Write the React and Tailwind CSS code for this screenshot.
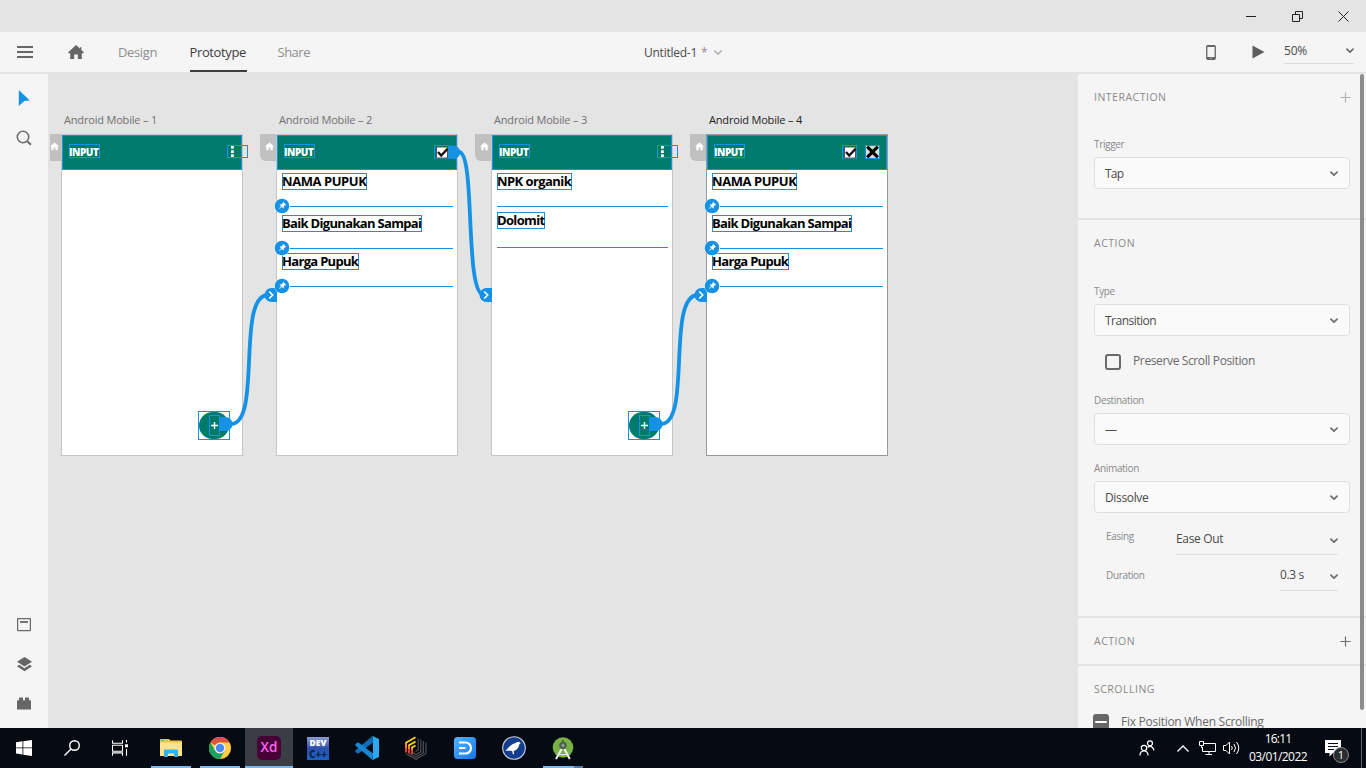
import { MdHome, MdPushPin } from "react-icons/md";

const Chevron = ({ className = "text-[#6e6e6e]" }) => (
  <svg width="8" height="6" viewBox="0 0 8 6" className={className} fill="none" stroke="currentColor" strokeWidth="1.7" strokeLinecap="round" strokeLinejoin="round">
    <path d="M.9 1.2 4 4.2 7.1 1.2" />
  </svg>
);

const Plus = ({ className }) => (
  <svg width="11" height="11" viewBox="0 0 11 11" className={`-mr-px ${className}`} stroke="currentColor" strokeWidth="1.2">
    <path d="M5.5 .5v10M.5 5.5h10" />
  </svg>
);

function TitleBar() {
  return (
    <div className="flex h-8 shrink-0 items-center justify-end gap-9 bg-[#e4e4e4] pr-[17px] text-[#222]">
      <svg width="10" height="11" viewBox="0 0 10 11" stroke="currentColor"><path d="M0 5.5h10" /></svg>
      <svg width="11" height="11" viewBox="0 0 11 11" fill="none" stroke="currentColor" className="-mr-px">
        <path d="M.5 3.5h7v7h-7zM3.5 3.500V.5h7v7h-3" />
      </svg>
      <svg width="11" height="11" viewBox="0 0 11 11" fill="none" stroke="currentColor"><path d="M.5 .5l10 10M10.5 .5l-10 10" /></svg>
    </div>
  );
}

function Toolbar() {
  return (
    <div className="flex h-10 shrink-0 bg-[#f5f5f5] text-[13px] tracking-[-0.37px] text-[#8e8e8e]">
      <div className="flex w-[576px] items-center">
        <svg width="16" height="12" viewBox="0 0 16 12" className="ml-[17px]" stroke="#666" strokeWidth="1.8"><path d="M0 1h16M0 6h16M0 11h16" /></svg>
        <svg width="16" height="14" viewBox="0 0 16 14" className="ml-[35px]" fill="#666">
          <path d="M8 0 12 3.6V2.2h1.4v2.7L16 7.4l-.6.9h-1.6V14H9.8V9.4H6.2V14H2.2V8.3H.5L0 7.4z" />
        </svg>
        <span className="ml-[34px] w-[71.5px] pt-0.5">Design</span>
        <span className="flex h-10 w-[57px] items-center border-b-2 border-[#3e3e3e] pt-[3px] text-[#3e3e3e]">Prototype</span>
        <span className="ml-[31px] pt-0.5 tracking-[-0.5px]">Share</span>
      </div>
      <div className="flex flex-1 items-center pt-0.5 pl-[68px] text-[12px] tracking-[-0.25px] text-[#4b4b4b]">
        <span>Untitled-1</span><span className="ml-1 text-[#8e8e8e]">*</span>
        <Chevron className="ml-[7px] text-[#b5b5b5]" />
      </div>
      <div className="flex w-[162px] items-center text-[12px] tracking-[-0.2px] text-[#4b4b4b]">
        <svg width="10" height="15" viewBox="0 0 10 15" className="ml-[2px]">
          <rect x=".75" y=".75" width="8.5" height="13.5" rx="1" fill="#f5f5f5" stroke="#666" strokeWidth="1.3" />
          <path d="M1 .5h8V2H1zM1 12h8v2.3H1z" fill="#666" /><circle cx="5" cy="13" r=".6" fill="#fff" />
        </svg>
        <svg width="13" height="14" viewBox="0 0 13 14" className="ml-9" fill="#5f5f5f"><path d="M.5 .5v13L12.5 7z" /></svg>
        <div className="ml-[19px] flex h-[24px] w-[70px] items-center justify-between border-b border-[#dcdcdc] pb-[1px]">
          <span>50%</span><Chevron />
        </div>
      </div>
    </div>
  );
}

function LeftRail() {
  return (
    <div className="flex w-12 shrink-0 flex-col items-center bg-[#f5f5f5] pt-4">
      <svg width="12" height="17" viewBox="0 0 12 17" fill="#1592e6"><path d="M.8 0 11.8 10.6 6.3 11 .8 16z" /></svg>
      <svg width="16" height="16" viewBox="0 0 16 16" className="mt-[23px]" fill="none" stroke="#6e6e6e" strokeWidth="1.6">
        <circle cx="7" cy="7" r="5.7" /><path d="M11.2 11.2l3.8 3.6" strokeWidth="2" />
      </svg>
      <div className="mt-auto flex flex-col items-center gap-[25px] pb-[18px]">
        <svg width="14" height="14" viewBox="0 0 14 14" fill="none" stroke="#666"><rect x=".6" y=".6" width="12.8" height="12" rx=".6" strokeWidth="1.2" /><path d="M3 4h8" strokeWidth="1.8" /></svg>
        <svg width="15" height="15" viewBox="0 0 15 15" fill="#666"><path d="M7.5 0 15 4.8 7.5 9.6 0 4.8z" /><path d="M0 9.2 2.2 7.8 7.5 11.2l5.3-3.4L15 9.2 7.5 14.2z" /></svg>
        <svg width="14" height="13" viewBox="0 0 14 13" fill="#666"><path d="M0 4.2q0-1 1-1h1V1.3Q2 .6 2.7 .6h2.6Q6 .6 6 1.3v1.9h2V1.3Q8 .6 8.7 .6h2.6q.7 0 .7.7v1.900h1q1 0 1 1V12q0 .6-.6.6H.6Q0 12.6 0 12z" /></svg>
      </div>
    </div>
  );
}

const Check = () => (
  <svg width="14" height="13" viewBox="0 0 14 13">
    <rect x="1" y=".5" width="12" height="12" fill="#555" /><rect x="2" y="1.5" width="10" height="10" fill="#fff" />
    <path d="M3 6l3.200 3.600L12.600 2.800" fill="none" stroke="#111" strokeWidth="2.300" />
  </svg>
);

const FORM = [
  { label: "NAMA PUPUK", top: 38, width: 85, line: 71, spacing: "tracking-[-0.43px]" },
  { label: "Baik Digunakan Sampai", top: 80, width: 140, line: 113, spacing: "tracking-[-0.68px]" },
  { label: "Harga Pupuk", top: 118, width: 77, line: 151, spacing: "tracking-[-0.69px]" },
];
const LIST = [
  { label: "NPK organik", top: 38, width: 75, line: 71, spacing: "tracking-[-0.57px]" },
  { label: "Dolomit", top: 77, width: 48, line: 112, spacing: "tracking-[-0.66px]" },
];

function Artboard({ n, x, active, rows = [], pinned, menu, fab, children }) {
  return (
    <>
      <div className={`absolute top-[37px] text-[11px] leading-[18px] tracking-[-0.18px] ${active ? "text-[#222]" : "text-[#717171]"}`} style={{ left: x + 3 }}>
        Android Mobile – {n}
      </div>
      <div className="absolute top-[60px] flex h-[27px] w-[17px] justify-center rounded-bl-md bg-[#c0c0c0] pt-[7px] pl-px text-white" style={{ left: x - 16 }}>
        <MdHome size={11} />
      </div>
      <div className={`absolute top-[60px] h-[322px] w-[182px] border bg-white ${active ? "border-[#999]" : "border-[#c6c6c6]"}`} style={{ left: x }}>
        <div className="h-[35px] border border-[#1592e6] bg-[#007b6b]" />
        <div className="absolute top-[9px] left-[7px] flex h-[14px] w-[31px] items-center border border-[#1592e6] pt-[2px] text-[10px] font-extrabold tracking-[-0.45px] whitespace-nowrap text-white"><span className="-ml-px">INPUT</span></div>
        {menu && (
          <div className="absolute top-[10px] left-[165px] h-[13px] w-[21px] border border-[#1592e6]">
            <svg width="3" height="11" viewBox="0 0 3 11" className="ml-[3px]" fill="#fff"><path d="M0 0h2.8v2.7H0zM0 4.2h2.8v2.7H0zM0 8.3h2.8V11H0z" /></svg>
          </div>
        )}
        {rows.map(({ label, top, width, line, spacing }) => (
          <div key={label}>
            <div className={`absolute left-[5px] flex h-[17px] items-center border border-[#1592e6] pt-px text-[13px] font-bold whitespace-nowrap text-black ${spacing}`} style={{ top, width }}><span className="-ml-px">{label}</span></div>
            <div className={`absolute h-px bg-[#1592e6] ${pinned ? "left-[13px] w-[163px]" : "left-[5px] w-[171px]"}`} style={{ top: line }} />
          </div>
        ))}
        {fab && (
          <div className="absolute top-[276px] left-[136px] h-[29px] w-8 border border-[#1592e6]">
            <div className="flex h-full w-full items-center justify-center rounded-full bg-[#007b6b]">
              <div className="flex h-[21px] w-[11px] items-center justify-center border border-[#1592e6]">
                <svg width="7" height="7" viewBox="0 0 7 7" stroke="#fff" strokeWidth="1.4"><path d="M3.5 0v7M0 3.5h7" /></svg>
              </div>
            </div>
          </div>
        )}
        {children}
      </div>
    </>
  );
}

const Pins = ({ x }) => [132, 174, 212].map((y) => (
  <svg key={y} width="17" height="17" viewBox="0 0 17 17" className="absolute" style={{ left: x - 3, top: y - 9 }}>
    <circle cx="9" cy="9" r="7.900" fill="#fff" opacity=".7" />
    <circle cx="9" cy="9" r="7.300" fill="#1592e6" />
    <g transform="rotate(45 9 9)"><MdPushPin x="4.500" y="4.500" size={9} color="#fff" /></g>
  </svg>
));

function Canvas() {
  return (
    <div className="min-w-0 flex-1 bg-[#e4e4e4] pl-0.5">
      <div className="relative h-full overflow-hidden">
        <Artboard n={1} x={11} menu fab />
        <Artboard n={2} x={226} rows={FORM} pinned>
          <div className="absolute top-[10px] left-[157px] h-[14px] w-[15px] border border-[#1592e6]"><Check /></div>
        </Artboard>
        <Artboard n={3} x={441} rows={LIST} menu fab />
        <Artboard n={4} x={656} rows={FORM} pinned active>
          <div className="absolute top-[10px] left-[135px] h-[14px] w-[15px] border border-[#1592e6]"><Check /></div>
          <div className="absolute top-[10px] left-[158px] h-[14px] w-[15px] border border-[#1592e6]">
            <svg width="13" height="12" viewBox="0 0 13 12"><rect width="13" height="12" fill="#d9dedd" /><path d="M1.200 .700l10.600 10.600M11.800 .700l-10.600 10.600" stroke="#000" strokeWidth="3.200" /></svg>
          </div>
        </Artboard>
        <svg className="absolute inset-0" width="1028" height="654" viewBox="50 74 1028 654" fill="none">
          <g stroke="#1592e6" strokeWidth="3.8">
            <path d="M231 424C262 424 236 295 268 295" />
            <path d="M459 152C476 152 464 295 484 295" />
            <path d="M661 424C692 424 666 295 698 295" />
          </g>
          <g fill="#1592e6">
            <path d="M448 145.5h6a7 6.8 0 0 1 0 13.5h-6z" />
            <path d="M219.500 417h6a7 7 0 0 1 0 14h-6z" />
            <path d="M649.500 417h6a7 7 0 0 1 0 14h-6z" />
          </g>
          {[277, 492, 707].map((x) => (
            <g key={x}>
              <path d={`M${x} 288h-5.500a7 7 0 0 0 0 14h5.500z`} fill="#1592e6" />
              <path d={`M${x - 7.8} 291.500l3.500 3.500-3.500 3.500`} stroke="#fff" strokeWidth="1.6" />
            </g>
          ))}
        </svg>
        <Pins x={226} />
        <Pins x={656} />
      </div>
    </div>
  );
}

const Heading = ({ children }) => (
  <div className="flex h-[18px] items-center justify-between text-[10.5px] leading-[18px] tracking-[0.5px] text-[#8a8a8a]">{children}</div>
);

const Select = ({ label, value, className, spacing = "tracking-[-0.35px]" }) => (
  <div className={className}>
    <div className="h-[14px] text-[10px] leading-[15px] tracking-[-0.34px] text-[#8a8a8a]">{label}</div>
    <div className={`mt-1.5 flex h-8 items-center justify-between rounded border border-[#dfdfdf] bg-[#fafafa] pt-px pr-[11px] pl-2.5 text-[12px] text-[#4b4b4b] ${spacing}`}>
      <span>{value}</span><Chevron />
    </div>
  </div>
);

function Inspector() {
  return (
    <div className="relative w-[288px] shrink-0 overflow-hidden bg-[#f5f5f5]">
      <section className="h-[146px] border-b-2 border-[#e3e3e3] px-4 pt-[14px]">
        <Heading><span>INTERACTION</span><Plus className="text-[#b3b3b3]" /></Heading>
        <Select className="pt-[31px]" label="Trigger" value="Tap" spacing="tracking-[-0.8px]" />
      </section>
      <section className="h-[398px] border-b-2 border-[#e3e3e3] px-4 pt-[14px]">
        <Heading><span>ACTION</span></Heading>
        <Select className="pt-8" label="Type" value="Transition" spacing="tracking-[-0.5px]" />
        <div className="mt-[18px] flex h-4 items-center pl-[11px]">
          <div className="h-4 w-4 rounded-[3px] border-2 border-[#6a6a6a]" />
          <span className="-mt-[2px] ml-3 text-[12px] tracking-[-0.37px] text-[#6a6a6a]">Preserve Scroll Position</span>
        </div>
        <Select className="pt-[23px]" label="Destination" value="—" />
        <Select className="pt-4" label="Animation" value="Dissolve" />
        <div className="mt-[13px] flex pr-3 pl-3">
          <span className="w-[70px] pt-[3px] text-[10px] tracking-[-0.34px] text-[#8a8a8a]">Easing</span>
          <div className="flex h-[29px] flex-1 justify-between border-b border-[#e1e1e1] text-[12px] leading-[26px] tracking-[-0.35px] text-[#4b4b4b]">
            <span>Ease Out</span><div className="pt-3"><Chevron /></div>
          </div>
        </div>
        <div className="mt-[7px] flex justify-between pr-3 pl-3">
          <span className="pt-[6px] text-[10px] tracking-[-0.34px] text-[#8a8a8a]">Duration</span>
          <div className="flex h-[29px] w-[58px] justify-between border-b border-[#e1e1e1] text-[12px] leading-[26px] tracking-[-0.35px] text-[#4b4b4b]">
            <span>0.3 s</span><div className="pt-3"><Chevron /></div>
          </div>
        </div>
      </section>
      <section className="flex h-12 flex-col justify-center border-b-2 border-[#e3e3e3] px-4">
        <Heading><span>ACTION</span><Plus className="text-[#6e6e6e]" /></Heading>
      </section>
      <section className="px-4 pt-[14px]">
        <Heading><span>SCROLLING</span></Heading>
        <div className="mt-4 -ml-px flex">
          <div className="flex h-4 w-4 items-center justify-center rounded-[3px] bg-[#666]"><div className="h-0.5 w-3 rounded-full bg-white" /></div>
          <span className="ml-3 text-[12px] leading-[16px] tracking-[-0.27px] text-[#6a6a6a]">Fix Position When Scrolling</span>
        </div>
      </section>
      <div className="absolute top-0 right-0.5 h-[636px] w-1 rounded-full bg-[#8c8c8c]" />
    </div>
  );
}

const Task = ({ children, on, className = "" }) => (
  <div className={`relative flex w-12 items-center justify-center ${className}`}>
    {children}
    {on && <div className={`absolute bottom-0 h-0.5 bg-[#76b9ed] ${on}`} />}
  </div>
);

function Taskbar() {
  return (
    <div className="flex h-10 shrink-0 bg-[#060b13] text-white">
      <Task>
        <svg width="16" height="16" viewBox="0 0 16 16" fill="#fff"><path d="M0 2.3 6.500 1.300v6.200H0zM7.300 1.200 16 0v7.500H7.300zM0 8.300h6.500v6.200L0 13.600zM7.300 8.300H16V16l-8.700-1.300z" /></svg>
      </Task>
      <Task>
        <svg width="16" height="16" viewBox="0 0 16 16" fill="none" stroke="#fff" strokeWidth="1.4"><circle cx="10.500" cy="5.500" r="4.800" /><path d="M7 9 .500 15.500" /></svg>
      </Task>
      <Task>
        <svg width="16" height="16" viewBox="0 0 16 16" fill="none" stroke="#fff" strokeWidth="1.1"><path d="M.5 .3v3h10v-3M.5 5.300h10v6H.5zM.5 15.700v-2.800h10v2.800M14.500 0v2.500M14.500 9v6.700" /><path d="M13 4.300h3v3h-3z" fill="#fff" stroke="none" /></svg>
      </Task>
      <Task on="inset-x-1" className="ml-[3px]">
        <svg width="22" height="18" viewBox="0 0 22 18"><path d="M0 1q0-1 1-1h8l1.500 1.500H21q1 0 1 1V17H0z" fill="#f5c63c" /><path d="M0 3.500h22V17H0z" fill="#ffe391" /><path d="M1.500 1h2v1h-2z" fill="#3bb273" /><path d="M4 18v-6.500Q4 10.500 5 10.500h12q1 0 1 1V18h-4v-3.500H8V18z" fill="#35b1ea" /></svg>
      </Task>
      <Task on="inset-x-1" className="mx-px">
        <svg width="22" height="22" viewBox="0 0 22 22">
          <circle cx="11" cy="11" r="11" fill="#ffcd42" />
          <path d="M11 11 1.470 5.500A11 11 0 0 1 20.530 5.500H11z" fill="#de5246" />
          <path d="M1.470 5.500A11 11 0 0 0 11 22l4.760-8.250L6.240 13.750z" fill="#1aa15f" />
          <circle cx="11" cy="11" r="5.500" fill="#f1f1f1" /><circle cx="11" cy="11" r="4.200" fill="#4c8bf5" />
        </svg>
      </Task>
      <Task on="inset-x-0" className="bg-[#3a3e44]">
        <div className="flex h-6 w-6 items-center justify-center rounded-[5px] bg-[#470137] text-[13.500px] leading-none font-semibold text-[#ff61f6]">Xd</div>
      </Task>
      <Task className="ml-px">
        <div className="flex h-[23px] w-[22px] flex-col items-center overflow-hidden bg-linear-to-b from-[#8f9bd0] via-[#2d4fae] to-[#1764c8] font-extrabold">
          <span className="text-[8.500px] leading-[12px]">DEV</span>
          <span className="text-[10px] leading-[11px] text-[#0a2747]">C++</span>
        </div>
      </Task>
      <Task className="ml-px">
        <svg width="24" height="24" viewBox="0 0 24 24"><path d="M17.500 0 18 6.500 3.500 17.500l-1.200.1L.3 15.700v-1.200z" fill="#0f6db8" /><path d="M17.500 24 18 17.500 3.500 6.500 2.300 6.400.3 8.300v1.200z" fill="#1787d0" /><path d="M17.500 0 24 3v18l-6.500 3-.6-.5 1.100-.8V1.300l-1.100-.8z" fill="#2aa9f1" /></svg>
      </Task>
      <Task className="ml-px">
        <svg width="22" height="24" viewBox="0 0 22 24" fill="none" strokeWidth="1.800">
          <path d="M1 17.800 11 23.200l10-5.700V6.500M4.200 17.500 11 21l7.400-4.300V5M7.300 16.500 11 18.500l4.800-2.800V3.500M10.500 15.500 13.200 14V2.500" stroke="#4e4e50" strokeWidth="1.200" />
          <path d="M1 16.500V6.500M4 17.500V9M7 18v-7" stroke="#f4471f" />
          <path d="M1 12V6.800M4 13V9.300M7 14v-2.700" stroke="#f98b20" />
          <path d="M.5 7 10.500 1.300M3.500 9.500l7-3.900M6.500 11.700l4-2.200" stroke="#ffd21e" />
        </svg>
      </Task>
      <Task className="ml-px">
        <svg width="22" height="22" viewBox="0 0 22 22"><defs><linearGradient id="dg" x1="0" y1="0" x2="1" y2="1"><stop stopColor="#55b4ff" /><stop offset="1" stopColor="#1177f2" /></linearGradient></defs><rect width="22" height="22" rx="3.500" fill="url(#dg)" /><path d="M5 5.500h6.500a5.500 5.500 0 0 1 0 11H5M5 11h6.500" fill="none" stroke="#fff" strokeWidth="2.200" /></svg>
      </Task>
      <Task className="ml-px">
        <svg width="24" height="24" viewBox="0 0 24 24"><circle cx="12" cy="12" r="11.300" fill="#123c8d" stroke="#c9cfdb" strokeWidth="1.100" /><path d="M3.500 15C7 11 8.500 8.500 13 7.200c1.400-.5 2.400-2 4.200-1.300l1.600 1.600c-1.300 0-1.500.8-1.800 2-.6 3-3 5-5.300 5.500l.3 3.300h-1.200l-.6-3.200C8 15 6 14.600 3.500 15z" fill="#fff" /></svg>
      </Task>
      <Task className="ml-px">
        <svg width="22" height="23" viewBox="0 0 22 23"><circle cx="11" cy="10.500" r="10.300" fill="#78b243" /><path d="M10.200 11 4 22M11.800 11l6 11" stroke="#f2f2f2" strokeWidth="2" /><path d="M6 16.500q5 2.500 10 0" stroke="#dfe6df" strokeWidth="1.300" fill="none" /><circle cx="11" cy="8.500" r="3.800" fill="#4d6253" /><path d="M10 3h2v3h-2z" fill="#4d6253" /><circle cx="11" cy="8.500" r="1.400" fill="#8fa392" /></svg>
        <div className="absolute bottom-0 left-1 flex h-0.5 w-10"><div className="w-[31px] bg-[#76b9ed]" /><div className="flex-1 bg-[#4f7ba0]" /></div>
      </Task>
      <div className="ml-auto flex items-center">
        <svg width="16" height="16" viewBox="0 0 16 16" fill="none" stroke="#fff" strokeWidth="1.200"><circle cx="11" cy="3.300" r="2.500" /><path d="M8.500 7.500q2.500-2.300 5 0 1.300 1.200 1.300 3" /><circle cx="5" cy="8" r="2.700" /><path d="M1 15.500c0-6 8-6 8 0" /></svg>
        <svg width="12" height="7" viewBox="0 0 12 7" className="ml-[22px]" fill="none" stroke="#fff" strokeWidth="1.300"><path d="M.5 6.500 6 1l5.500 5.500" /></svg>
        <svg width="17" height="14" viewBox="0 0 17 14" className="ml-2.5" fill="none" stroke="#fff"><path d="M5 2.500h11.500v8H3.500V6M10 10.500v3M6.500 13.500H13M.5 .5h4v4h-4zM2.500 4.500v2h1" /></svg>
        <svg width="17" height="14" viewBox="0 0 17 14" className="ml-[7px]" fill="none" stroke="#fff"><path d="M.5 4.500h2.500L6.500 1v12L3 9.500H.5zM8.500 5q1.500 2 0 4M11 3q3 4 0 8M13.500 1q4.500 6 0 12" /></svg>
        <div className="ml-2 flex w-[60px] flex-col items-center text-[12px] leading-[18px]">
          <span className="tracking-[-0.8px]">16:11</span><span className="tracking-[-0.57px]">03/01/2022</span>
        </div>
        <div className="relative ml-[17px] h-[17px] w-9">
          <svg width="16" height="17" viewBox="0 0 16 17"><path d="M0 0h16v13h-8l-3.500 3.500V13H0z" fill="#fff" /><path d="M3 3.500h10M3 6.500h10M3 9.500h6" stroke="#060b13" /></svg>
          <div className="absolute top-[7px] left-2 flex h-4 w-4 items-center justify-center rounded-full border border-[#8c8c8c] bg-[#2a2c2f] text-[11px] leading-none">1</div>
        </div>
        <div className="h-10 w-[5px] border-l border-[#5d6066]" />
      </div>
    </div>
  );
}

export default function App() {
  return (
    <div className="flex h-[768px] w-[1366px] flex-col overflow-hidden bg-[#e3e3e3] font-['Open_Sans','Noto_Sans',sans-serif]">
      <TitleBar />
      <Toolbar />
      <div className="mt-0.5 flex min-h-0 flex-1">
        <LeftRail />
        <Canvas />
        <Inspector />
      </div>
      <Taskbar />
    </div>
  );
}
